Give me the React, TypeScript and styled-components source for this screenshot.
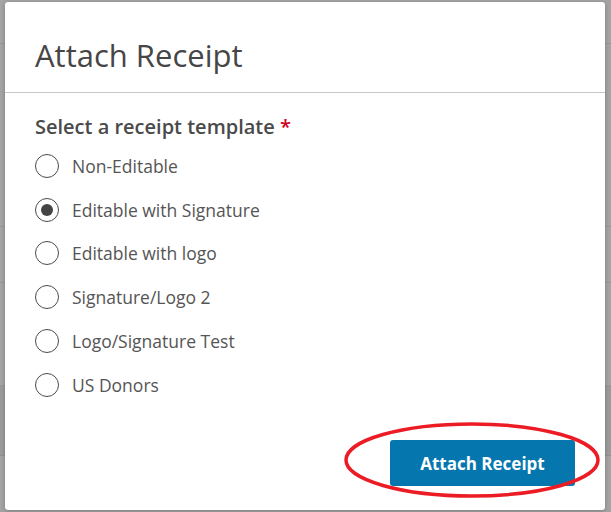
import React, { useState } from 'react';
import styled, { createGlobalStyle } from 'styled-components';

const GlobalStyle = createGlobalStyle`
  html, body {
    margin: 0;
    padding: 0;
    width: 611px;
    height: 512px;
    overflow: hidden;
    font-family: 'Open Sans', 'Noto Sans', Arial, sans-serif;
  }
`;

// page behind the backdrop
const Page = styled.div`
  position: relative;
  width: 611px;
  height: 512px;
  background: #a4a4a4;
  display: flex;
  flex-direction: column;
`;

const PageRow = styled.div<{ $h: number; $dark?: boolean }>`
  height: ${p => p.$h}px;
  flex: none;
  border-bottom: 1px solid ${p => (p.$dark ? '#909090' : '#979797')};
  background: ${p => (p.$dark ? '#9b9b9b' : '#a4a4a4')};
`;

const Modal = styled.div`
  position: absolute;
  left: 5px;
  top: 2px;
  width: 600px;
  height: 508px;
  background: #fff;
  border-radius: 3px;
  box-shadow: 0 1px 4px rgba(0, 0, 0, 0.25);
  display: flex;
  flex-direction: column;
`;

const Header = styled.div`
  height: 91px;
  box-sizing: border-box;
  padding: 16px 0 0 30px;
  display: flex;
  align-items: center;
  border-bottom: 1px solid #c6c6c6;
`;

const Title = styled.h1`
  margin: 0;
  font-size: 31px;
  font-weight: 400;
  color: #464646;
`;

const Body = styled.div`
  flex: 1;
  padding: 20px 30px 0;
  display: flex;
  flex-direction: column;
`;

const Legend = styled.div`
  font-size: 20px;
  font-weight: 600;
  color: #4a4a4a;
  line-height: 28px;
  margin-bottom: 3px;
`;

const Required = styled.span`
  color: #d0021b;
`;

const OptionList = styled.div`
  display: flex;
  flex-direction: column;
`;

const Option = styled.label`
  display: flex;
  align-items: center;
  height: 43.8px;
  gap: 13px;
  cursor: pointer;
  font-size: 17.5px;
  color: #555;
`;

const RadioCircle = styled.span<{ $on: boolean }>`
  width: 24px;
  height: 24px;
  box-sizing: border-box;
  border-radius: 50%;
  border: 1.5px solid #4a4a4a;
  display: flex;
  align-items: center;
  justify-content: center;
  flex: none;
  &::after {
    content: '';
    width: 12px;
    height: 12px;
    border-radius: 50%;
    background: #444;
    display: ${p => (p.$on ? 'block' : 'none')};
  }
`;

const Footer = styled.div`
  display: flex;
  justify-content: flex-end;
  padding: 0 30px 24px 0;
  margin-top: auto;
`;

const PrimaryButton = styled.button`
  width: 185px;
  height: 46px;
  border: none;
  border-radius: 3px;
  background: #0677ae;
  color: #fff;
  font-family: inherit;
  font-size: 17px;
  font-weight: 700;
  cursor: pointer;
`;

const Annotation = styled.svg`
  position: absolute;
  left: 340px;
  top: 418px;
  pointer-events: none;
`;

const templates = [
  'Non-Editable',
  'Editable with Signature',
  'Editable with logo',
  'Signature/Logo 2',
  'Logo/Signature Test',
  'US Donors',
];

export default function App() {
  const [picked, setPicked] = useState(1);

  return (
    <>
      <GlobalStyle />
      <Page>
        <PageRow $h={43} />
        <PageRow $h={182} />
        <PageRow $h={55} />
        <PageRow $h={102} />
        <PageRow $h={69} $dark />
        <PageRow $h={57} />
        <Modal>
          <Header>
            <Title>Attach Receipt</Title>
          </Header>
          <Body>
            <Legend>
              Select a receipt template <Required>*</Required>
            </Legend>
            <OptionList>
              {templates.map((t, i) => (
                <Option key={t} onClick={() => setPicked(i)}>
                  <RadioCircle $on={picked === i} />
                  {t}
                </Option>
              ))}
            </OptionList>
          </Body>
          <Footer>
            <PrimaryButton>Attach Receipt</PrimaryButton>
          </Footer>
        </Modal>
        <Annotation width="264" height="84" viewBox="0 0 264 84">
          <ellipse cx="132" cy="42" rx="126" ry="36" fill="none" stroke="#ec1c24" strokeWidth="3.5" />
        </Annotation>
      </Page>
    </>
  );
}
